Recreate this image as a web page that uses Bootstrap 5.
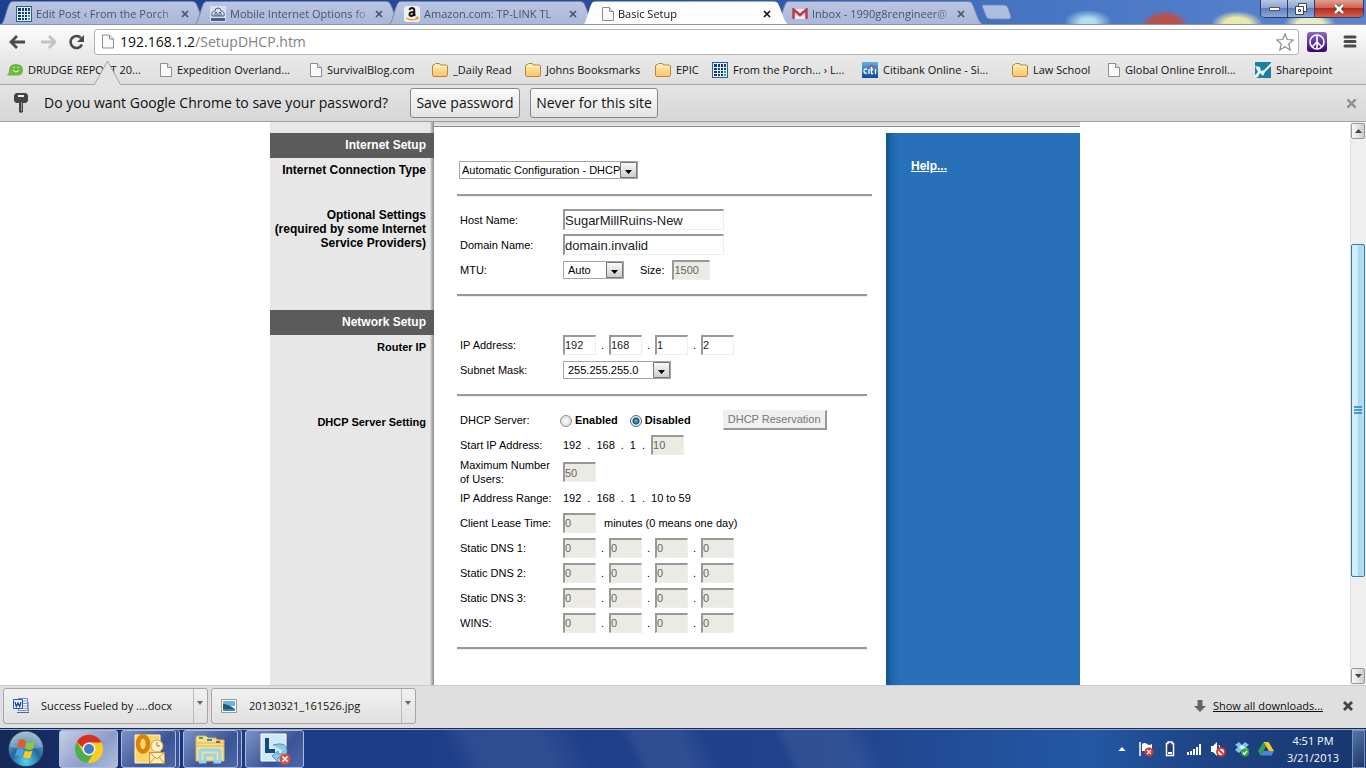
<!DOCTYPE html>
<html lang="en">
<head>
<meta charset="utf-8">
<meta name="viewport" content="width=device-width, initial-scale=1">
<title>Basic Setup</title>
<link href="https://cdn.jsdelivr.net/npm/bootstrap@5.3.0/dist/css/bootstrap.min.css" rel="stylesheet">
<script src="https://cdn.jsdelivr.net/npm/bootstrap@5.3.0/dist/js/bootstrap.bundle.min.js" defer></script>
<style>
  body { font: 11px/14px "Open Sans", sans-serif; color: #111; height: 100vh; background: #fff; }
  svg { display: block; flex: none; }
  button { font: inherit; color: inherit; padding: 0; border: 0; background: none; }
  a { color: inherit; text-decoration: none; }

  /* tab strip */
  .strip { height: 25px; padding-left: 7px; overflow: hidden; border-bottom: 1px solid #8a94a8;
    background:
      radial-gradient(ellipse 24px 12px at 1088px 22px, #b4ddf2 30%, transparent),
      radial-gradient(ellipse 24px 15px at 1165px 25px, #b9504c 60%, transparent),
      radial-gradient(ellipse 26px 13px at 1237px 24px, #e9eaa8 50%, transparent),
      radial-gradient(ellipse 26px 12px at 1310px 24px, #e6ecc4 50%, transparent),
      linear-gradient(90deg, #1d3f8f 0, #2b4f9f 50%, #4575c3 75%, #5b84cf 100%); }
  .browser-tab { flex: 0 1 194px; min-width: 0; height: 25px; padding: 2px 12px 0 9px; position: relative; color: #4a5366; }
  .browser-tab .shape { position: absolute; left: -6px; top: 1px; width: calc(100% + 12px); height: 24px; }
  .browser-tab > * { position: relative; }
  .browser-tab.current { color: #111; z-index: 2; }
  .tab-title { white-space: nowrap; overflow: hidden; flex: 1; margin-left: 4px; margin-right: 4px; line-height: 22px;
    -webkit-mask-image: linear-gradient(90deg, #000 86%, #0004); mask-image: linear-gradient(90deg, #000 86%, #0004); }
  .win-btns { height: 18px; margin-right: 2px; border: 1px solid #2c3f6a; border-top: 0; border-radius: 0 0 5px 5px; overflow: hidden; }
  .win-btns button { width: 27px; height: 17px; display: grid; place-items: center; border-right: 1px solid #2c3f6a; background: linear-gradient(#b9c9e6, #8ba4d2 45%, #5f7fbb 50%, #8ba9dc); }
  .win-btns .win-close { width: 48px; border: 0; background: linear-gradient(#dfa094, #cf6355 45%, #b52b1c 50%, #d5604e); }

  /* toolbar */
  .toolbar { height: 33px; padding: 0 9px; background: linear-gradient(#fdfdfd, #e8e8e8); }
  .nav-btns { width: 85px; }
  .omnibox { height: 26px; border: 1px solid #b3b3b3; border-radius: 3px; background: #fff; padding: 0 4px 0 7px; font-size: 14px; }
  .omnibox a { margin-left: 6px; }
  .omnibox .path { color: #808080; }
  .bookmarks { height: 27px; padding: 0 9px 3px 7px; background: linear-gradient(#e8e8e8, #dfdfdf); border-bottom: 1px solid #a5a5a5;
    display: grid; grid-template-columns: 153fr 150fr 122fr 93fr 130fr 57fr 150fr 150fr 96fr 147fr 102fr; align-items: center; }
  .bookmarks a { display: flex; align-items: center; gap: 5px; white-space: nowrap; min-width: 0; overflow: hidden; }
  .infobar { height: 37px; padding: 0 9px 0 14px; background: linear-gradient(#e4e4e4, #d7d7d7); border-bottom: 1px solid #a0a0a0; font-size: 14px; position: relative; }
  .infobar .pointer { position: absolute; left: 93px; top: -25px; }
  .question { min-width: 350px; }
  .bar-btn { height: 30px; border: 1px solid #888; border-radius: 3px; background: linear-gradient(#fbfbfb, #e3e3e3); white-space: nowrap; }
  .save-btn { width: 110px; margin-right: 10px; }
  .never-btn { width: 128px; }

  /* page */
  .viewport { min-height: 0; overflow: hidden; }
  .router { width: 810px; font: 11px/14px "Liberation Sans", Arial, sans-serif; color: #000; }
  .side { width: 164px; background: linear-gradient(90deg, transparent 160px, #c4c4c4 161px, #8a8a8a) #e7e7e7; font-weight: 700; text-align: right; padding-top: 11px; }
  .side h2 { height: 25px; margin: 0; padding: 0 8px; font-size: 12px; line-height: 25px; font-weight: 700; color: #fff; background: #5b5b5b; }
  .side div { padding: 5px 8px 0 0; }
  .side .s-type { height: 45px; font-size: 12px; } .side .s-opt { height: 107px; font-size: 12px; } .s-ip { height: 75px; }
  .topline { height: 5px; background: linear-gradient(#d4d4d4, #e6e6e6); border-bottom: 1px solid #8e8e8e; }
  .settings { padding: 31px 14px 0 23px; }
  .settings hr { margin: 11px 5px 11px 0; height: 3px; border: 0; border-top: 2px solid #999; border-bottom: 1px solid #eee; opacity: 1; }
  .settings .wide { margin-right: 0; }
  .f-row { height: 25px; padding: 0 0 2px 3px; display: flex; align-items: center; white-space: nowrap; }
  .f-row.first { padding-left: 2px; }
  .f-row.tall { height: 28px; padding-bottom: 0; }
  .f-label { width: 103px; flex: none; }
  .f-label.radio-label { width: 100px; }
  .f-row input[type=text] { height: 20px; padding: 0; border: 2px solid; border-width: 2px 1px 1px 2px; border-color: #999 #eee #eee #999; border-radius: 0; font: inherit; color: #222; background: #fff; }
  .f-row input[type=text].name-box { width: 161px; height: 21px; font-size: 13px; }
  .f-row input.oct { width: 33px; }
  .f-row input.size-box { width: 38px; }
  .f-row input[type=text]:disabled { background: #ebebe4; color: #666; }
  .dot { width: 13px; text-align: center; }
  .plain { display: flex; align-items: center; gap: 6px; }
  .f-row select { height: 18px; font: inherit; color: #000; padding: 0 0 0 4px; border: 1px solid #a5a5a5; border-radius: 0; appearance: none; -webkit-appearance: none;
    background: #fff url("data:image/svg+xml,%3Csvg xmlns='http://www.w3.org/2000/svg' width='17' height='16'%3E%3Cdefs%3E%3ClinearGradient id='g' x2='0' y2='1'%3E%3Cstop stop-color='%23fafafa'/%3E%3Cstop offset='1' stop-color='%23ccc'/%3E%3C/linearGradient%3E%3C/defs%3E%3Cpath d='M.5.5h16v15H.5z' fill='url(%23g)' stroke='%23777'/%3E%3Cpath d='M5 8h7l-3.500 4z'/%3E%3C/svg%3E") right center no-repeat; }
  .f-row .sel-type { width: 179px; padding-left: 2px; } .sel-mtu { width: 61px; } .sel-mask { width: 108px; }
  .f-row input[type=radio] { appearance: none; -webkit-appearance: none; width: 12px; height: 12px; margin: 3px 3px 0 0; border: 1px solid #8e8e8e; border-radius: 50%; background: radial-gradient(#fff 0, #ddd 70%); }
  .f-row input[type=radio]:checked { border-color: #567; background: radial-gradient(circle, #6fc3e8 0, #134c72 3px, #e6eef2 4px); }
  .reserve { width: 104px; height: 20px; color: #777; background: #efefef; border: 1px solid; border-width: 1px 2px 2px 1px; border-color: #eee #999 #999 #eee; }
  .help-pane { width: 194px; margin-top: 6px; padding: 26px 25px; background: linear-gradient(90deg, #0c5587, #1a66a6 5px, #2871b8 13px); color: #fff; font-size: 12px; font-weight: 700; }
  .help-pane a { text-decoration: underline; }

  /* scroll bar */
  .scroller { width: 16px; padding: 1px 1px 1px 0; background: #efefef; border-left: 1px solid #e2e2e2; }
  .scroller button { height: 16px; border: 1px solid #999; border-radius: 2px; background: linear-gradient(90deg, #fafafa, #ccc); display: grid; place-items: center; }
  .gap-above { flex: 105; } .gap-below { flex: 91; }
  .thumb { flex: 333; border: 1px solid #3d7ba5; border-radius: 2px; background: linear-gradient(90deg, #d4effc 0 45%, #a8d8f1 50%, #b6e0f5); display: grid; place-items: center; }

  /* downloads and task bar */
  .downloads { height: 43px; padding: 2px 12px 5px 3px; gap: 3px; background: #dfdfdf; border-top: 1px solid #ccc; }
  .dl-item { width: 205px; height: 36px; border: 1px solid #a5a5a5; border-radius: 3px; background: linear-gradient(#f1f1f1, #e0e0e0); padding-left: 9px; }
  .dl-more { width: 14px; height: 34px; border-left: 1px solid #bbb; padding: 10px 0 0 3px; }
  .taskbar { height: 40px; border-top: 1px solid #1a2b4a; box-shadow: inset 0 1px #8ea6cf; padding-left: 7px; color: #fff;
    background:
      linear-gradient(65deg, transparent 33%, #ffffff12 35% 40%, transparent 43% 46%, #ffffff12 47% 50%, transparent 52% 57%, #ffffff12 58% 62%, transparent 64%),
      linear-gradient(90deg, #14285a, #1d3c88 20%, #21428c 60%, #2358a4 80%, #1f4687 87%, #17366f); }
  .start-btn { margin-right: 14px; }
  .task-btn { width: 55px; height: 38px; margin-right: 7px; border: 1px solid #a9bbdf; border-radius: 3px; display: grid; place-items: center; background: linear-gradient(135deg, #7c92c6, #3c5496 60%, #4c67ab); }
  .task-btn.stacked { box-shadow: 3px 0 0 #3a5295, 4px 0 0 #a9bbdf; }
  .task-btn.on { width: 59px; margin-right: 3px; background: linear-gradient(135deg, #c6cfe6, #8d9cc9 60%, #b0bbdc); }
  .task-btn.wide-btn { width: 59px; }
  .tray { gap: 8px; }
  .clock { line-height: 17px; width: 62px; text-align: center; }
  .desk { width: 13px; height: 38px; margin-right: 1px; border: 1px solid #7b90b8; background: linear-gradient(135deg, #5675ab, #1c3768); }
</style>
</head>
<body class="d-flex flex-column overflow-hidden">

<svg width="0" height="0" class="position-absolute" aria-hidden="true">
  <defs>
    <linearGradient id="gFold" x2="0" y2="1"><stop stop-color="#ffecb5"/><stop offset="1" stop-color="#fcc566"/></linearGradient>
    <linearGradient id="gTab" x2="0" y2="1"><stop stop-color="#b9c6e2"/><stop offset="1" stop-color="#a9b8d9"/></linearGradient>
    <radialGradient id="gOrb" cx=".5" cy=".85" r=".9"><stop stop-color="#56d5f5"/><stop offset=".45" stop-color="#21689d"/><stop offset="1" stop-color="#9db6cc"/></radialGradient>
    <linearGradient id="gCiti" x2="0" y2="1"><stop stop-color="#5fb0e8"/><stop offset="1" stop-color="#0e4a94"/></linearGradient>
    <linearGradient id="gPeace" x2="0" y2="1"><stop stop-color="#8a6cc0"/><stop offset="1" stop-color="#3b007c"/></linearGradient>
    <symbol id="page" viewBox="0 0 12 14"><path d="M.5.5h7l4 4v9H.5z" fill="#fafafa" stroke="#8d8d8d"/><path d="M7.500.5v4h4" fill="#e4e4e4" stroke="#8d8d8d"/></symbol>
    <symbol id="folder" viewBox="0 0 16 14"><path d="M.5 12V3l1-1.500h1L3.500.5h4l1 1.500h6l1 1V12l-1 1.500h-13z" fill="url(#gFold)" stroke="#b5853d"/><path d="M2 3.500h12" stroke="#fff5d5"/></symbol>
    <symbol id="gridicon" viewBox="0 0 16 16"><path fill="#2c5c96" d="M0 0h16v16H0z"/><path fill="#e8f0f8" d="M1 1h14v14H1z"/><path fill="#133f6e" d="M2 2h3v3H2zM6 2h2v3H6zM9 2h2v3H9zM12 2h2v3h-2zM2 6h3v2H2zM6 6h2v2H6zM9 6h2v2H9zM12 6h2v2h-2zM2 9h3v2H2zM6 9h2v2H6zM9 9h2v2H9zM2 12h3v2H2zM6 12h2v2H6zM9 12h2v2H9z"/><path fill="#2b9bb0" d="M12 9h2v2h-2zM12 12h2v2h-2z"/></symbol>
    <symbol id="cross" viewBox="0 0 8 8"><path d="M1 1l6 6M7 1L1 7" stroke="currentColor" stroke-width="1.700" fill="none"/></symbol>
    <symbol id="tabshape" viewBox="0 0 207 24" preserveAspectRatio="none"><path d="M0 23.500C4 22 6 4 10 1q1-.5 3-.5H192q3 0 4 2C200 10 202 22 207 23.500z" fill="url(#gTab)" stroke="#7685a8"/></symbol>
  </defs>
</svg>

<header class="strip d-flex align-items-start flex-shrink-0">
  <div class="browser-tab d-flex align-items-center"><svg class="shape"><use href="#tabshape"/></svg><svg width="16" height="16"><use href="#gridicon"/></svg><span class="tab-title">Edit Post ‹ From the Porch</span><button aria-label="Close tab"><svg width="8" height="8"><use href="#cross"/></svg></button></div>
  <div class="browser-tab d-flex align-items-center"><svg class="shape"><use href="#tabshape"/></svg><svg width="16" height="16" viewBox="0 0 16 16"><path fill="#d9e0ee" d="M0 0h16v16H0z"/><path d="M2 10q-1-5 3-5 0-3 3-3t3 3q4 0 3 5zM5 10V7q1-2 2 0v3M9 10V7q1-2 2 0v3" fill="none" stroke="#4a5d87"/><path fill="#4a5d87" d="M1 12h14v3H1z"/></svg><span class="tab-title">Mobile Internet Options fo</span><button aria-label="Close tab"><svg width="8" height="8"><use href="#cross"/></svg></button></div>
  <div class="browser-tab d-flex align-items-center"><svg class="shape"><use href="#tabshape"/></svg><svg width="16" height="16" viewBox="0 0 16 16"><rect width="16" height="16" rx="3" fill="#eef0f4"/><path d="M5.500 4q.5-2 2.500-2t2.300 2v4.500l1 1.200M10 6Q5.500 6 5.500 8.300 5.500 10 7.300 10 9.500 10 10 7.500" fill="none" stroke="#111" stroke-width="1.900"/><path d="M2 12q6 3.500 11.500.5M11.500 11.500h2.500l-.7 2" fill="none" stroke="#f0981c" stroke-width="1.400"/></svg><span class="tab-title">Amazon.com: TP-LINK TL</span><button aria-label="Close tab"><svg width="8" height="8"><use href="#cross"/></svg></button></div>
  <div class="browser-tab current d-flex align-items-center"><svg class="shape" viewBox="0 0 207 24" preserveAspectRatio="none"><path d="M0 24C4 22 6 4 10 1q1-.5 3-.5H192q3 0 4 2C200 10 202 22 207 24z" fill="#fdfdfd"/></svg><svg width="12" height="14" class="mx-1"><use href="#page"/></svg><span class="tab-title ms-0">Basic Setup</span><button aria-label="Close tab"><svg width="8" height="8"><use href="#cross"/></svg></button></div>
  <div class="browser-tab d-flex align-items-center"><svg class="shape"><use href="#tabshape"/></svg><svg width="16" height="12" viewBox="0 0 16 12"><path fill="#f3e9ec" d="M1 1h14v10H1z"/><path d="M1.500 11V1.500L8 7l6.500-5.500V11" fill="none" stroke="#c4364a" stroke-width="2.500"/></svg><span class="tab-title">Inbox - 1990g8rengineer@</span><button aria-label="Close tab"><svg width="8" height="8"><use href="#cross"/></svg></button></div>
  <button class="mt-1 ms-1" aria-label="New tab"><svg width="32" height="17" viewBox="0 0 32 17"><path d="M1 2q0-1 2-1h20q3 0 4 3l3 9q0 2-2 2H9q-3 0-4-3z" fill="#adbfe0" stroke="#7489b6"/></svg></button>
  <div class="win-btns d-flex ms-auto">
    <button aria-label="Minimize"><svg width="13" height="6"><path d="M1.500 1.500h10v3h-10z" fill="#fff" stroke="#556"/></svg></button>
    <button aria-label="Restore"><svg width="12" height="12"><path d="M3.500.5h8v8h-8z" fill="#fff" stroke="#445"/><path d="M.5 3.500h8v8h-8zM3.500 6.500h2v2h-2z" fill="#fff" stroke="#445"/></svg></button>
    <button class="win-close" aria-label="Close"><svg width="12" height="10" viewBox="0 0 12 10"><path d="M2 1l8 8M10 1L2 9" stroke="#533" stroke-width="4"/><path d="M2 1l8 8M10 1L2 9" stroke="#fff" stroke-width="2.500"/></svg></button>
  </div>
</header>

<nav class="toolbar d-flex align-items-center flex-shrink-0">
  <div class="nav-btns d-flex align-items-center flex-shrink-0">
    <button aria-label="Back"><svg width="16" height="14" viewBox="0 0 16 14"><path d="M8 1L2 7l6 6M2 7h14" fill="none" stroke="#4a4a4a" stroke-width="2.800"/></svg></button>
    <button class="ms-3" aria-label="Forward"><svg width="15" height="14" viewBox="0 0 15 14"><path d="M8 1l6 6-6 6M14 7H0" fill="none" stroke="#c2c2c2" stroke-width="2.800"/></svg></button>
    <button class="ms-2 ps-1" aria-label="Reload"><svg width="17" height="16" viewBox="0 0 17 16"><path d="M13 4A6 6 0 1 0 14 10.500" fill="none" stroke="#4a4a4a" stroke-width="2.600"/><path d="M16 1v7H9z" fill="#4a4a4a"/></svg></button>
  </div>
  <div class="omnibox d-flex align-items-center flex-grow-1">
    <svg width="12" height="15"><use href="#page"/></svg>
    <a href="#" class="flex-grow-1">192.168.1.2<span class="path">/SetupDHCP.htm</span></a>
    <svg width="18" height="18" viewBox="0 0 18 18"><path d="M9 1l2.300 5.500 6 .5-4.600 3.900 1.500 6L9 13.700 3.800 16.900l1.500-6L.7 7l6-.5z" fill="#fff" stroke="#8b8b8b" stroke-width="1.200"/></svg>
  </div>
  <button class="ms-2" aria-label="Peace extension"><svg width="20" height="20" viewBox="0 0 20 20"><rect width="20" height="20" rx="3" fill="url(#gPeace)"/><path d="M10 3v14M10 10l-5 5M10 10l5 5" stroke="#fff" stroke-width="1.600"/><circle cx="10" cy="10" r="7" fill="none" stroke="#fff" stroke-width="1.600"/></svg></button>
  <button class="ms-3" aria-label="Menu"><svg width="14" height="13"><path d="M2 2h10M2 6.500h10M2 11h10" stroke="#4a4a4a" stroke-width="3" stroke-linecap="round"/></svg></button>
</nav>

<nav class="bookmarks flex-shrink-0">
  <a href="#"><svg width="16" height="14" viewBox="0 0 16 14"><path d="M0 12q2-1 2-5 0-6 7-6t7 6-7 5.500H0z" fill="#6dba3e"/><path d="M6 7q3 4 6 0M7 4v1M11 4v1" fill="none" stroke="#fff"/></svg>DRUDGE REPORT 20...</a>
  <a href="#"><svg width="12" height="14"><use href="#page"/></svg>Expedition Overland...</a>
  <a href="#"><svg width="12" height="14"><use href="#page"/></svg>SurvivalBlog.com</a>
  <a href="#"><svg width="16" height="14"><use href="#folder"/></svg>_Daily Read</a>
  <a href="#"><svg width="16" height="14"><use href="#folder"/></svg>Johns Booksmarks</a>
  <a href="#"><svg width="16" height="14"><use href="#folder"/></svg>EPIC</a>
  <a href="#"><svg width="16" height="16"><use href="#gridicon"/></svg>From the Porch... › L...</a>
  <a href="#"><svg width="16" height="16" viewBox="0 0 16 16"><path fill="url(#gCiti)" d="M0 0h16v16H0z"/><path d="M5 7.500Q2 6 2 9t3 2M7 7v5M9.500 5v6q0 1 1.500.5M8.500 7.500H11M13.500 7v5" fill="none" stroke="#fff" stroke-width="1.300"/><path d="M6 5q3.500-3 8 0" fill="none" stroke="#c1405a"/></svg>Citibank Online - Si...</a>
  <a href="#"><svg width="16" height="14"><use href="#folder"/></svg>Law School</a>
  <a href="#"><svg width="12" height="14"><use href="#page"/></svg>Global Online Enroll...</a>
  <a href="#"><svg width="16" height="16" viewBox="0 0 16 16"><path fill="#1c7f9f" d="M0 0h16v16H0z"/><path d="M0 4l5 1 1 4 3-1 7-7v3l-6 6-2 4-3-3-2 4-3 1v-3l3-3z" fill="#e4f4f8"/></svg>Sharepoint</a>
</nav>

<section class="infobar d-flex align-items-center flex-shrink-0">
  <svg class="pointer" width="30" height="26" viewBox="0 0 30 26"><path d="M1 25L14.500 1 28 25v1H1z" fill="#e4e4e4"/><path d="M0 24.500h1.500L14.500 1l13 23.500H30" fill="none" stroke="#a5a5a5"/></svg>
  <svg width="14" height="20" viewBox="0 0 14 20"><path d="M2 0h10l2 2v6l-2 2H9v9l-2 1-2-1v-9H2L0 8V2z" fill="#444"/><path d="M4 3h6" stroke="#eee" stroke-width="2"/><path d="M7.500 9v9" stroke="#999"/></svg>
  <span class="question ms-3 text-nowrap">Do you want Google Chrome to save your password?</span>
  <button class="bar-btn save-btn ms-3">Save password</button>
  <button class="bar-btn never-btn">Never for this site</button>
  <button class="ms-auto" aria-label="Dismiss"><svg width="11" height="11" style="color:#909090"><use href="#cross"/></svg></button>
</section>

<div class="viewport d-flex flex-grow-1">
  <main class="flex-grow-1 overflow-hidden d-flex justify-content-center">
    <div class="router d-flex flex-shrink-0">
      <aside class="side">
        <h2>Internet Setup</h2>
        <div class="s-type">Internet Connection Type</div>
        <div class="s-opt text-nowrap">Optional Settings<br>(required by some Internet<br>Service Providers)</div>
        <h2>Network Setup</h2>
        <div class="s-ip">Router IP</div>
        <div>DHCP Server Setting</div>
      </aside>
      <div class="flex-grow-1 d-flex flex-column">
        <div class="topline"></div>
        <div class="d-flex flex-grow-1">
          <form class="settings flex-grow-1">
            <div class="f-row first"><select class="sel-type" aria-label="Internet connection type"><option>Automatic Configuration - DHCP</option></select></div>
            <hr class="wide">
            <div class="f-row"><label class="f-label" for="host">Host Name:</label><input type="text" class="name-box" id="host" value="SugarMillRuins-New"></div>
            <div class="f-row"><label class="f-label" for="domain">Domain Name:</label><input type="text" class="name-box" id="domain" value="domain.invalid"></div>
            <div class="f-row"><label class="f-label" for="mtu">MTU:</label><select class="sel-mtu" id="mtu"><option>Auto</option></select><label class="ms-3 me-2" for="size">Size:</label><input type="text" class="size-box" id="size" value="1500" disabled></div>
            <hr>
            <div class="f-row"></div>
            <div class="f-row"><label class="f-label" for="ip1">IP Address:</label><input type="text" class="oct" id="ip1" value="192"><span class="dot">.</span><input type="text" class="oct" value="168" aria-label="IP 2"><span class="dot">.</span><input type="text" class="oct" value="1" aria-label="IP 3"><span class="dot">.</span><input type="text" class="oct" value="2" aria-label="IP 4"></div>
            <div class="f-row"><label class="f-label" for="mask">Subnet Mask:</label><select class="sel-mask" id="mask"><option>255.255.255.0</option></select></div>
            <hr>
            <div class="f-row"><span class="f-label radio-label">DHCP Server:</span><input type="radio" name="dhcp" id="on"><label for="on" class="fw-bold me-2 pe-1">Enabled</label><input type="radio" name="dhcp" id="off" checked><label for="off" class="fw-bold pe-2">Disabled</label><button type="button" class="reserve ms-4" disabled>DHCP Reservation</button></div>
            <div class="f-row"><label class="f-label" for="start">Start IP Address:</label><span class="plain"><span>192</span><span>.</span><span>168</span><span>.</span><span>1</span><span>.</span><input type="text" class="oct" id="start" value="10" disabled></span></div>
            <div class="f-row tall"><label class="f-label" for="users">Maximum Number<br>of Users:</label><input type="text" class="oct" id="users" value="50" disabled></div>
            <div class="f-row"><span class="f-label">IP Address Range:</span><span class="plain"><span>192</span><span>.</span><span>168</span><span>.</span><span>1</span><span>.</span><span>10 to 59</span></span></div>
            <div class="f-row"><label class="f-label" for="lease">Client Lease Time:</label><input type="text" class="oct" id="lease" value="0" disabled><span class="ms-2">minutes (0 means one day)</span></div>
            <div class="f-row"><label class="f-label" for="d1">Static DNS 1:</label><input type="text" class="oct" id="d1" value="0" disabled><span class="dot">.</span><input type="text" class="oct" value="0" disabled aria-label="DNS 1 part 2"><span class="dot">.</span><input type="text" class="oct" value="0" disabled aria-label="DNS 1 part 3"><span class="dot">.</span><input type="text" class="oct" value="0" disabled aria-label="DNS 1 part 4"></div>
            <div class="f-row"><label class="f-label" for="d2">Static DNS 2:</label><input type="text" class="oct" id="d2" value="0" disabled><span class="dot">.</span><input type="text" class="oct" value="0" disabled aria-label="DNS 2 part 2"><span class="dot">.</span><input type="text" class="oct" value="0" disabled aria-label="DNS 2 part 3"><span class="dot">.</span><input type="text" class="oct" value="0" disabled aria-label="DNS 2 part 4"></div>
            <div class="f-row"><label class="f-label" for="d3">Static DNS 3:</label><input type="text" class="oct" id="d3" value="0" disabled><span class="dot">.</span><input type="text" class="oct" value="0" disabled aria-label="DNS 3 part 2"><span class="dot">.</span><input type="text" class="oct" value="0" disabled aria-label="DNS 3 part 3"><span class="dot">.</span><input type="text" class="oct" value="0" disabled aria-label="DNS 3 part 4"></div>
            <div class="f-row"><label class="f-label" for="wins">WINS:</label><input type="text" class="oct" id="wins" value="0" disabled><span class="dot">.</span><input type="text" class="oct" value="0" disabled aria-label="WINS part 2"><span class="dot">.</span><input type="text" class="oct" value="0" disabled aria-label="WINS part 3"><span class="dot">.</span><input type="text" class="oct" value="0" disabled aria-label="WINS part 4"></div>
            <hr>
          </form>
          <aside class="help-pane"><a href="#">Help...</a></aside>
        </div>
      </div>
    </div>
  </main>
  <div class="scroller d-flex flex-column flex-shrink-0">
    <button aria-label="Scroll up"><svg width="7" height="4"><path d="M0 4l3.500-4L7 4z" fill="#444"/></svg></button>
    <div class="gap-above"></div>
    <div class="thumb"><svg width="8" height="8"><path d="M0 1h8M0 4h8M0 7h8" stroke="#2d7fae" stroke-width="1.500"/></svg></div>
    <div class="gap-below"></div>
    <button aria-label="Scroll down"><svg width="7" height="4"><path d="M0 0l3.500 4L7 0z" fill="#444"/></svg></button>
  </div>
</div>

<section class="downloads d-flex align-items-center flex-shrink-0">
  <div class="dl-item d-flex align-items-center">
    <svg width="16" height="16" viewBox="0 0 16 16"><path d="M5.500.5h9v12h-9z" fill="#fff" stroke="#6b8fc9"/><path d="M7 3h7M7 5.500h7M7 8h7M7 10.500h7" stroke="#7b9bd0"/><path d="M4 14.500h12V4" fill="none" stroke="#4667a8"/><path d="M.5 1.500h9v9h-9z" fill="#e8f0fb" stroke="#2d5ba8"/><path d="M2 4l1.300 4.500L5 5l1.700 3.500L8 4" fill="none" stroke="#1c489b" stroke-width="1.300"/></svg>
    <span class="ms-2 ps-1">Success Fueled by ....docx</span>
    <button class="dl-more ms-auto" aria-label="More"><svg width="6" height="4" class="mb-3"><path d="M0 0h6L3 4z" fill="#666"/></svg></button>
  </div>
  <div class="dl-item d-flex align-items-center">
    <svg width="16" height="14" viewBox="0 0 16 14"><path d="M.5.5h15v13H.5z" fill="#fff" stroke="#9a9a9a"/><path fill="#6cb3e4" d="M2 2h12v5H2z"/><path d="M2 5q5 0 12 5v2H2z" fill="#24596a"/><path d="M2 10h12v2H2z" fill="#3b86b8"/></svg>
    <span class="ms-2 ps-1">20130321_161526.jpg</span>
    <button class="dl-more ms-auto" aria-label="More"><svg width="6" height="4" class="mb-3"><path d="M0 0h6L3 4z" fill="#666"/></svg></button>
  </div>
  <svg width="12" height="12" class="ms-auto"><path d="M3.500 0h5v6H12l-6 6-6-6h3.500z" fill="#666"/></svg>
  <a href="#" class="text-decoration-underline ms-1">Show all downloads...</a>
  <button class="ms-3" aria-label="Close downloads"><svg width="12" height="12" viewBox="0 0 12 12"><path d="M2 2l8 8M10 2l-8 8" stroke="#444" stroke-width="2.800"/></svg></button>
</section>

<footer class="taskbar d-flex align-items-center flex-shrink-0">
  <button class="start-btn" aria-label="Start"><svg width="38" height="38" viewBox="0 0 38 38"><circle cx="19" cy="19" r="18" fill="url(#gOrb)" stroke="#1b3155" stroke-width="1.500"/><path d="M3 17a16 16 0 0 1 32 0Q18 21 3 17z" fill="#fff" opacity=".25"/><path d="M12 10q4-2 7 1l-2 7q-4-2-7 0z" fill="#e8562a"/><path d="M20 11.500q4 2 8-.5l-2 8q-4 2-8-.5z" fill="#8dc63f"/><path d="M10 19.500q4-2 7 .5l-2 7q-4-3-7-.5z" fill="#4aa3e0"/><path d="M18 20.500q4 2 7.500 0l-2 7q-4 2-7.500-.5z" fill="#fcc820"/></svg></button>
  <button class="task-btn on" aria-label="Chrome"><svg width="30" height="30" viewBox="0 0 30 30"><circle cx="15" cy="15" r="14" fill="#f9cd1d"/><path d="M2.800 8a14 14 0 0 1 24.700.5H15a6.500 6.500 0 0 0-6.300 5z" fill="#d93025"/><path d="M2.800 8A14 14 0 0 0 13.500 29l5.500-9a6.500 6.500 0 0 1-9.800-2z" fill="#4bae4f"/><circle cx="15" cy="15" r="6.500" fill="#f3f3f3"/><circle cx="15" cy="15" r="5" fill="#3f7fc8"/></svg></button>
  <button class="task-btn stacked" aria-label="Outlook"><svg width="32" height="32" viewBox="0 0 32 32"><path d="M2 2h25v22l-8 6H2z" fill="#fbd66d" stroke="#fff3cc"/><ellipse cx="10" cy="11" rx="5" ry="7.500" fill="none" stroke="#d98309" stroke-width="4.500"/><circle cx="24" cy="13" r="6" fill="#fdf0d0" stroke="#e0a33c"/><path d="M24 9v4h3" fill="none" stroke="#b2761a"/><path d="M16.500 19.500h15v11h-15z" fill="#ffeebd" stroke="#c99532"/><path d="M17 20l7 6 7-6M17 30l5-6M31 30l-5-6" fill="none" stroke="#c99532"/></svg></button>
  <button class="task-btn stacked" aria-label="Explorer"><svg width="33" height="30" viewBox="0 0 33 30"><path d="M2 4q0-2 2-2h8l2 2h8l1 2h7v21H2z" fill="#f7e08c" stroke="#d9b550"/><path d="M3 9h27M3 12h27" stroke="#d9b550"/><path d="M5 3h4v2H5z" fill="#3cae4f"/><path d="M13 5h5v2h-5z" fill="#3d7fd0"/><path d="M22 7h4v2h-4z" fill="#cf4a3c"/><path d="M6 28V18q0-2 2-2h16q2 0 2 2v10M5 28h6v-7h10v7h6" fill="none" stroke="#96d2f2" stroke-width="3"/></svg></button>
  <button class="task-btn wide-btn" aria-label="Lync"><svg width="32" height="32" viewBox="0 0 32 32"><path d="M2 1h25v27H2z" fill="#cfe9f7" stroke="#fff"/><path d="M8 5v13h8" fill="none" stroke="#17477f" stroke-width="4"/><path d="M14 12q14-4 14 6 0 7-9 7v4l-6-6 6-5v3q5 0 5-3" fill="#8cc8e8" stroke="#4a97c6"/><circle cx="26" cy="26" r="5.500" fill="#d8503f"/><path d="M23.500 23.500l5 5M28.500 23.500l-5 5" stroke="#fff" stroke-width="1.600"/></svg></button>

  <div class="tray d-flex align-items-center ms-auto">
    <svg width="16" height="16"><path d="M4.500 10h7L8 6z" fill="#fff"/></svg>
    <svg width="16" height="16"><path d="M2 1v14" stroke="#fff" stroke-width="1.500"/><path d="M4 3q3-2 5 0t5 0v7H4z" fill="#fff"/><circle cx="11" cy="11" r="4.500" fill="#d9342b"/><path d="M9 9l4 4M13 9l-4 4" stroke="#fff" stroke-width="1.300"/></svg>
    <svg width="16" height="16"><path d="M6 2.500V1h4v1.500h1.500v12h-7v-12z" fill="#223f75" stroke="#fff" stroke-width="1.500"/><path d="M6 11h4v2H6z" fill="#fff"/></svg>
    <svg width="16" height="16"><path d="M1 11h2v3H1zM4 10h2v4H4zM7 8h2v6H7zM10 6h2v8h-2zM13 3h2v11h-2z" fill="#fff"/></svg>
    <svg width="16" height="16"><path d="M1 5h2l4-4v14l-4-4H1z" fill="#fff"/><path d="M9 4q2 3 0 8" fill="none" stroke="#fff"/><circle cx="11" cy="11" r="4" fill="#fff" stroke="#d9342b" stroke-width="1.800"/><path d="M8.500 8.500l5 5" stroke="#d9342b" stroke-width="1.800"/></svg>
    <svg width="16" height="16"><path d="M1 4l4-3 3 3 3-3 4 3-3 2 3 3-4 3-3-3-3 3-4-3 3-3z" fill="#79c6ee"/><path d="M8 4l3 2-3 3-3-3z" fill="#e6f6ff"/><circle cx="11" cy="11.500" r="4" fill="#3ba43b"/><path d="M9 11.500l1.500 1.500 2.500-3" fill="none" stroke="#fff" stroke-width="1.300"/></svg>
    <svg width="16" height="16"><path d="M5.500 1h5L16 10h-5z" fill="#fbc926"/><path d="M5.500 1L0 10l2.500 4.500L8 5.500z" fill="#35a253"/><path d="M5 10h11l-2.500 4.500h-11z" fill="#4a84dc"/></svg>
    <div class="clock">4:51 PM<br>3/21/2013</div>
    <button class="desk" aria-label="Show desktop"></button>
  </div>
</footer>
</body>
</html>
